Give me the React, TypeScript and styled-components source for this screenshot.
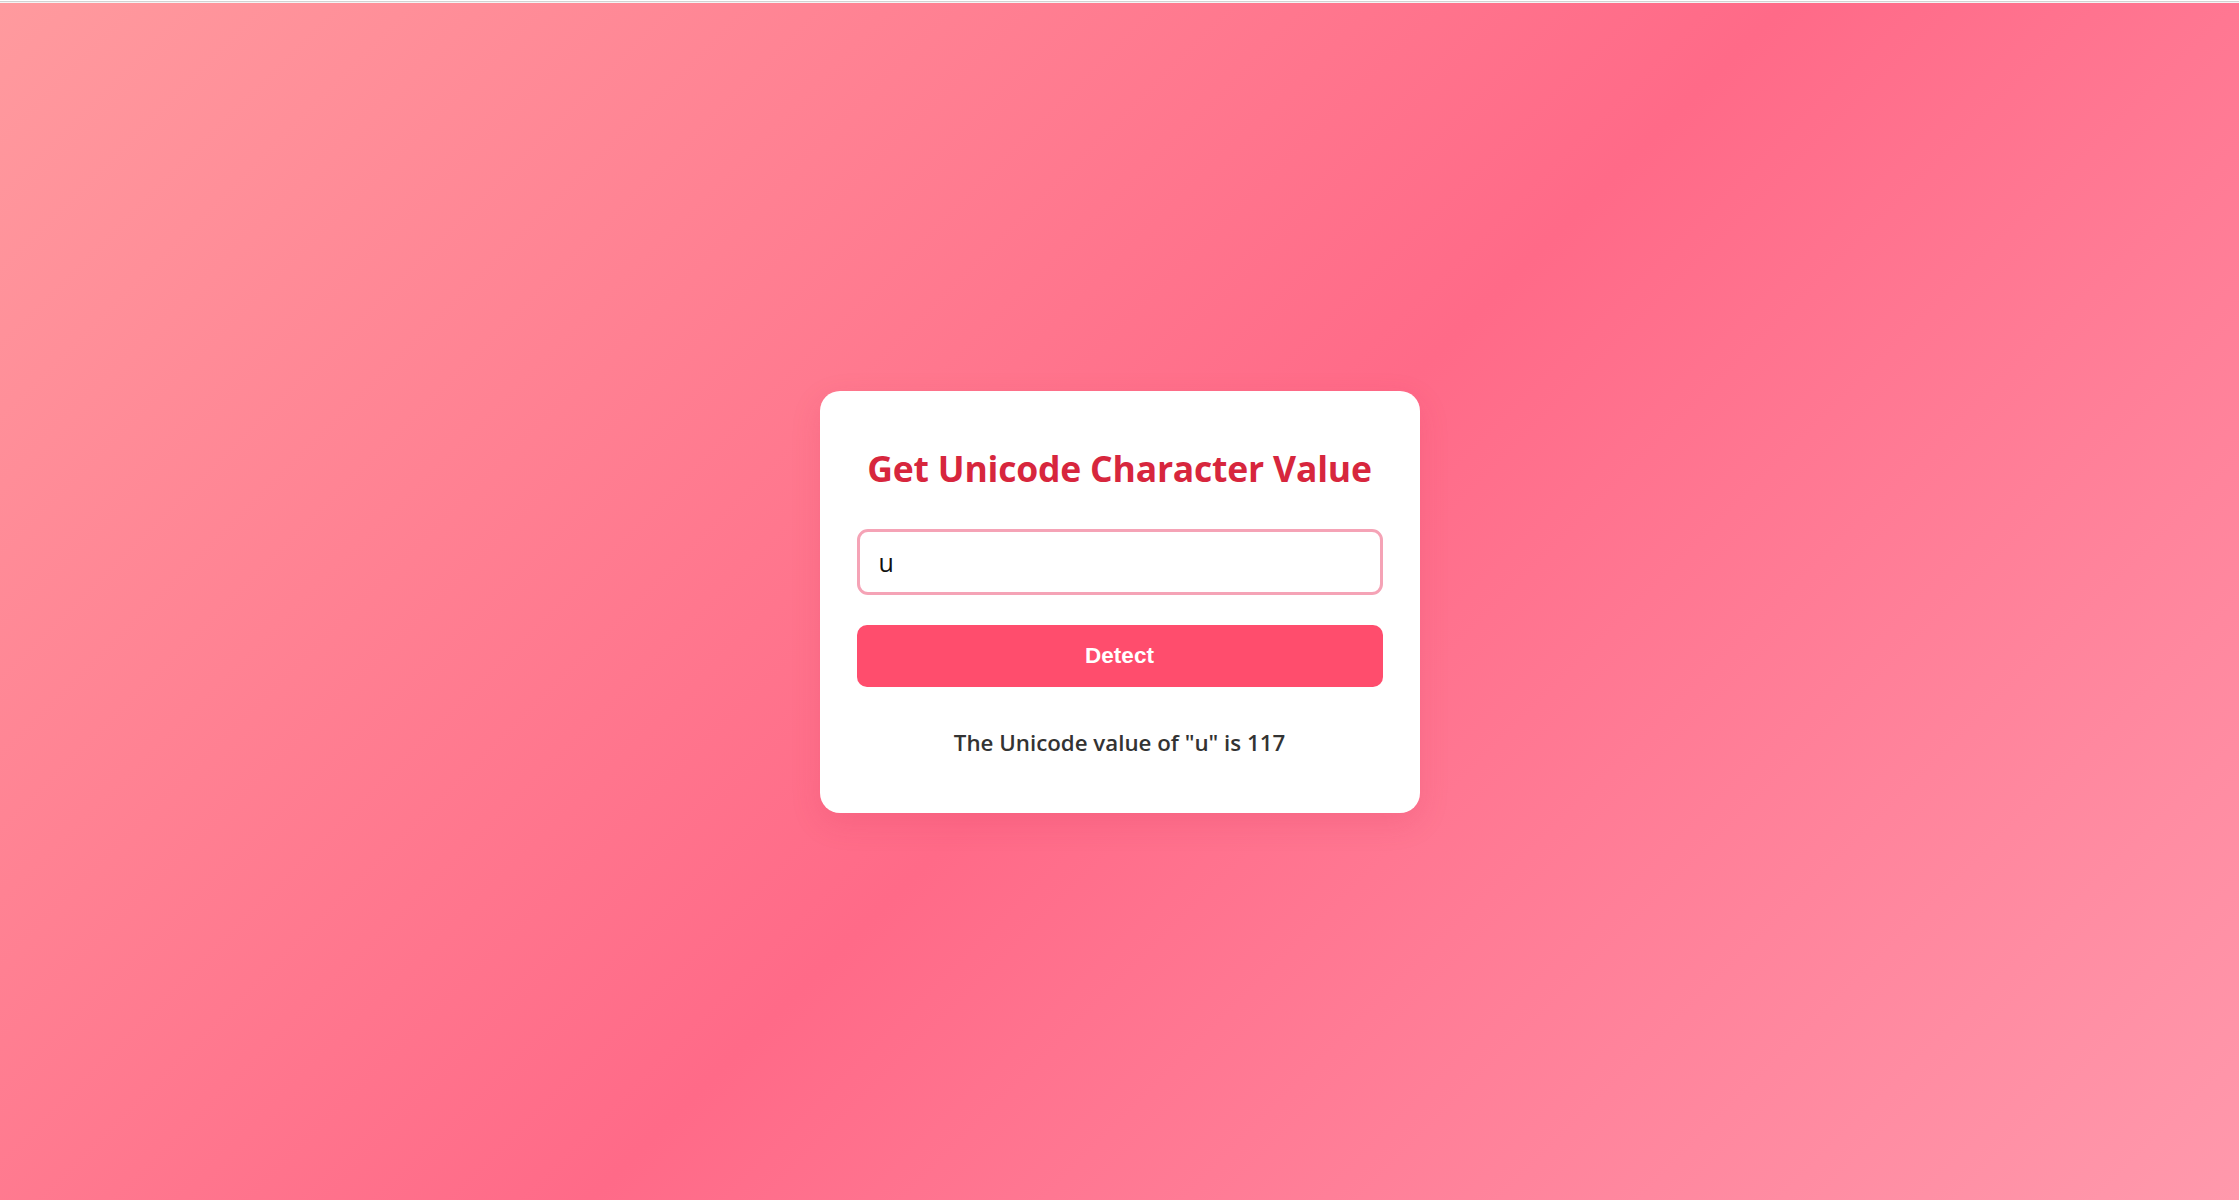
import React, { useState } from "react";
import styled, { createGlobalStyle } from "styled-components";

const GlobalStyle = createGlobalStyle`
  html, body {
    margin: 0;
    padding: 0;
    background: #ffffff;
    overflow: hidden;
  }
  * { box-sizing: border-box; }
`;

const TopEdge = styled.div`
  height: 3px;
  background: linear-gradient(#ffffff 0 1px, #d2d2d2 1px 2px, #f4f4f4 2px 3px);
`;

const Page = styled.main`
  height: 1197px;
  display: flex;
  align-items: center;
  justify-content: center;
  background: linear-gradient(135deg, #ff9a9e 0%, #ff6a88 52%, #ff99ac 100%);
  font-family: "Open Sans", "Noto Sans", sans-serif;
`;

const Card = styled.section`
  width: 600px;
  background: #ffffff;
  border-radius: 20px;
  padding: 54px 37px 52px;
  display: flex;
  flex-direction: column;
  box-shadow: 0 10px 30px rgba(200, 40, 80, 0.15);
`;

const Title = styled.h2`
  margin: 0;
  text-align: center;
  color: #d7263d;
  font-size: 35.5px;
  font-weight: 700;
  line-height: 46px;
  letter-spacing: -0.2px;
  white-space: nowrap;
`;

const Field = styled.input`
  margin-top: 38px;
  height: 66px;
  width: 100%;
  border: 3px solid #f5a3b6;
  border-radius: 11px;
  padding: 0 19px;
  font-family: "Open Sans", "Noto Sans", sans-serif;
  font-size: 25px;
  color: #111111;
  background: #ffffff;
  outline: none;
`;

const DetectButton = styled.button`
  margin-top: 30px;
  height: 62px;
  width: 100%;
  border: none;
  border-radius: 10px;
  background: #ff4d6d;
  color: #ffffff;
  font-family: "Liberation Sans", Arial, sans-serif;
  font-weight: 700;
  font-size: 22.5px;
  cursor: pointer;
`;

const Result = styled.p`
  margin: 38px 0 0;
  text-align: center;
  color: #333333;
  font-size: 22.3px;
  font-weight: 600;
  line-height: 36px;
`;

export default function App() {
  const [value, setValue] = useState("u");
  const [result, setResult] = useState('The Unicode value of "u" is 117');

  const detect = () => {
    if (!value) {
      setResult("Please enter a character");
      return;
    }
    const ch = Array.from(value)[0];
    setResult(`The Unicode value of "${ch}" is ${ch.codePointAt(0)}`);
  };

  return (
    <>
      <GlobalStyle />
      <TopEdge />
      <Page>
        <Card>
          <Title>Get Unicode Character Value</Title>
          <Field
            type="text"
            value={value}
            onChange={(e) => setValue(e.target.value)}
            maxLength={2}
          />
          <DetectButton onClick={detect}>Detect</DetectButton>
          <Result>{result}</Result>
        </Card>
      </Page>
    </>
  );
}
